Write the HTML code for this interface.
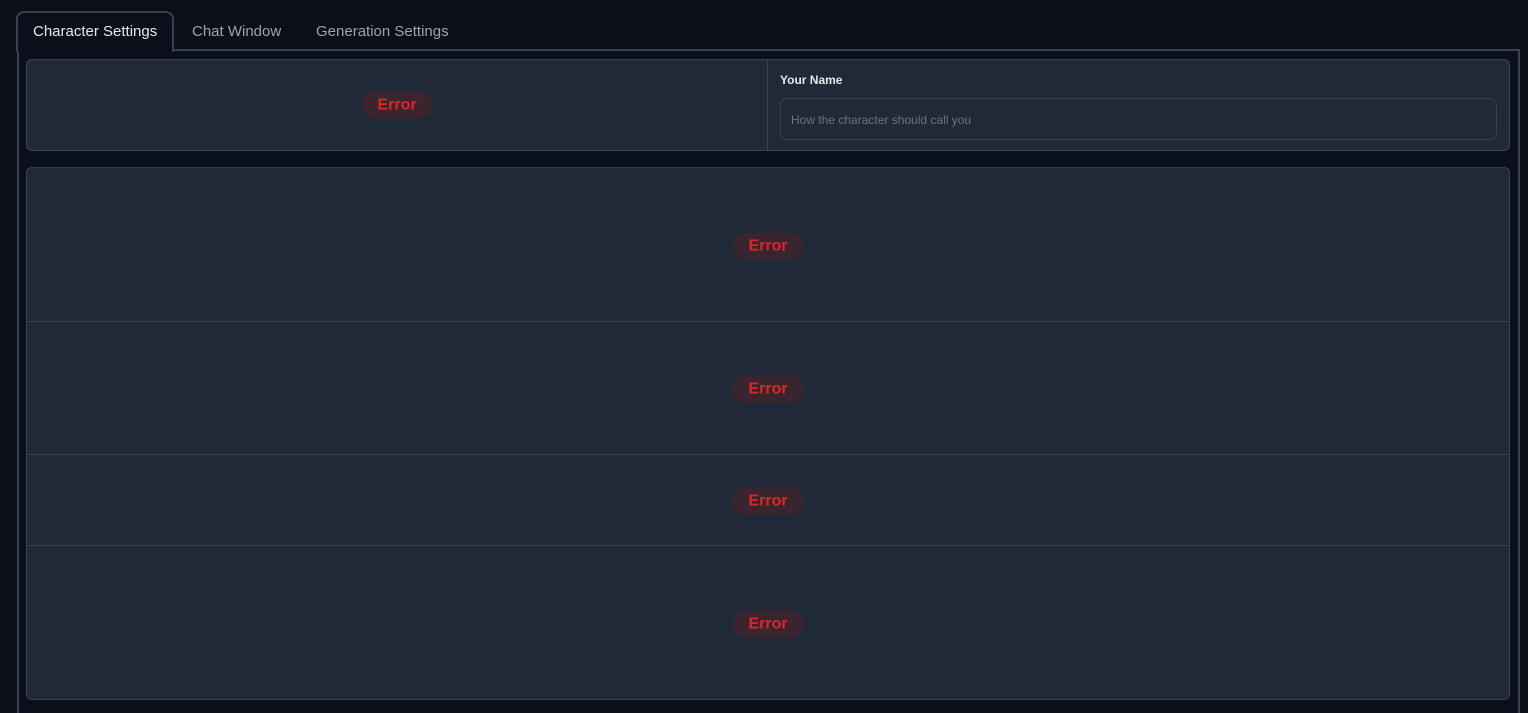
<!DOCTYPE html><html style="height:713px;overflow:hidden"><head><style>
body{margin:0;background:#0b0f19;width:1528px;height:713px;overflow:hidden;font-family:"Liberation Sans",sans-serif;position:relative}
.a{position:absolute;box-sizing:border-box}
.tab{font-size:15px;color:#9ca3af;top:23px}
.err{position:absolute;width:71px;height:27px;border-radius:14px;background:#3a252f;color:#dc2626;font-weight:bold;font-size:16px;text-align:center;line-height:27px;transform:translate(-50%,-50%)}
</style></head><body>
<div class="a" style="left:17px;top:49px;width:1503px;height:680px;border:2px solid #374151"></div>
<div class="a" style="left:16px;top:11px;width:158px;height:41px;border:2px solid #374151;border-bottom:none;border-radius:8px 8px 0 0;background:#0b0f19"></div>
<div class="a tab" style="left:33px;color:#e5e7eb">Character Settings</div>
<div class="a tab" style="left:192px">Chat Window</div>
<div class="a tab" style="left:316px">Generation Settings</div>
<div class="a" style="left:26px;top:59px;width:1484px;height:92px;background:#1f2937;border:1px solid #374151;border-radius:6px"></div>
<div class="a" style="left:767px;top:60px;width:1px;height:90px;background:#374151"></div>
<div class="err" style="left:397px;top:105px">Error</div>
<div class="a" style="left:780px;top:73px;font-size:12px;font-weight:bold;color:#e5e7eb">Your Name</div>
<div class="a" style="left:780px;top:98px;width:717px;height:42px;border:1px solid #374151;border-radius:7px;font-size:12px;color:#6b7280;padding:14px 10px">How the character should call you</div>
<div class="a" style="left:26px;top:167px;width:1484px;height:533px;background:#1f2937;border:1px solid #374151;border-radius:6px"></div>
<div class="a" style="left:27px;top:321px;width:1482px;height:1px;background:#374151"></div>
<div class="a" style="left:27px;top:454px;width:1482px;height:1px;background:#374151"></div>
<div class="a" style="left:27px;top:545px;width:1482px;height:1px;background:#374151"></div>
<div class="err" style="left:768px;top:246px">Error</div>
<div class="err" style="left:768px;top:389px">Error</div>
<div class="err" style="left:768px;top:501px">Error</div>
<div class="err" style="left:768px;top:624px">Error</div>
</body></html>
